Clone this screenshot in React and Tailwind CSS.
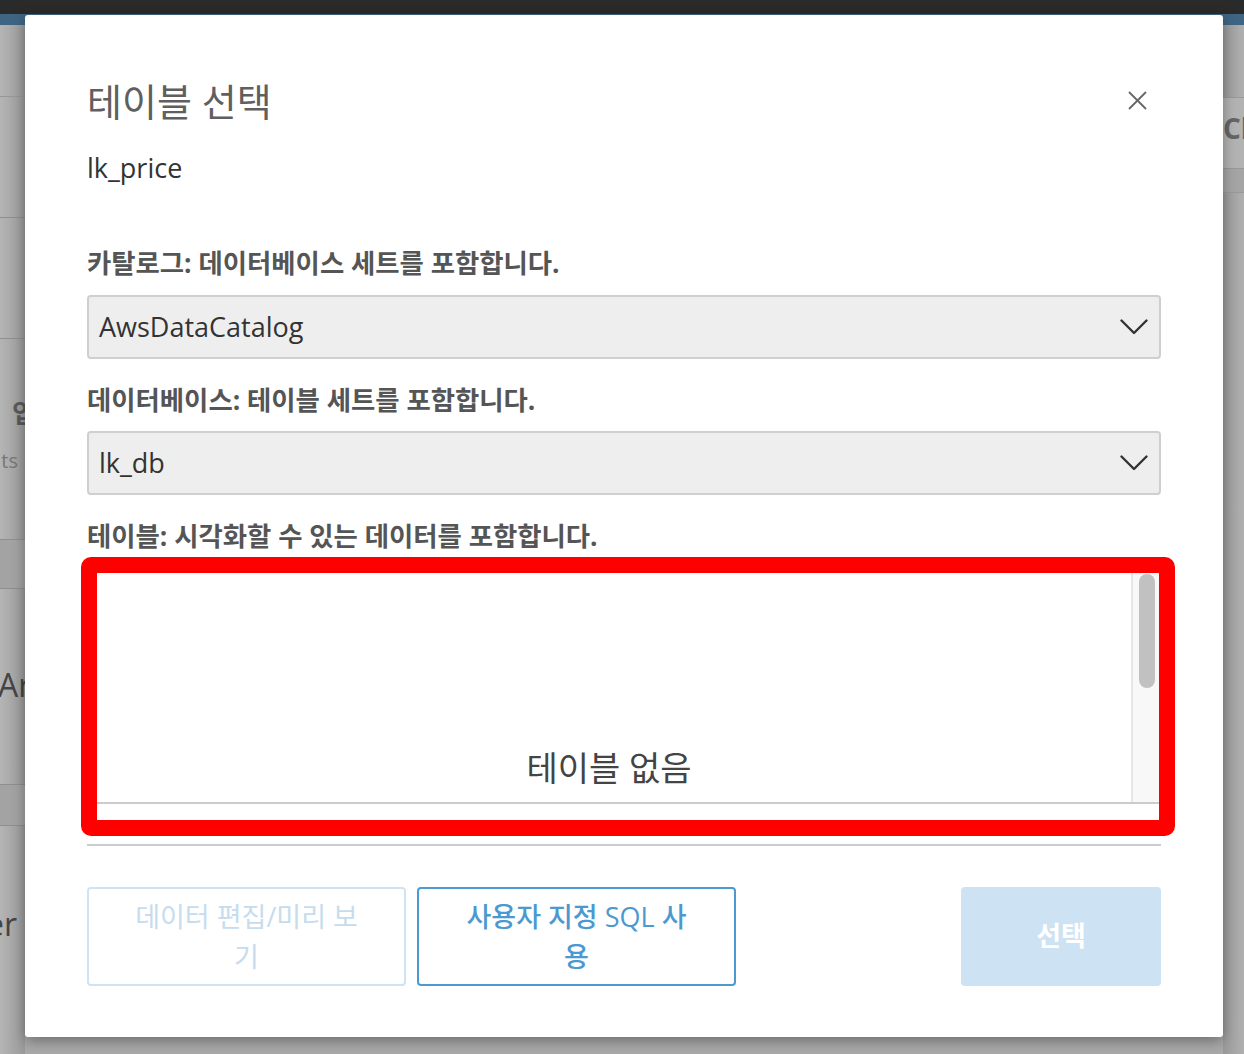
import React from "react";

const FONT = { fontFamily: "'Open Sans','Noto Sans CJK KR',sans-serif" };

function Chevron() {
  return (
    <svg width="28" height="16" viewBox="0 0 28 16" fill="none">
      <path d="M1.5 1.5 L14 14 L26.5 1.5" stroke="#333" strokeWidth="2.4" strokeLinecap="round" strokeLinejoin="round" />
    </svg>
  );
}

function Select({ value }) {
  return (
    <div className="h-[64px] rounded-[4px] border-2 border-[#cfcfcf] bg-[#eeeeee] flex items-center justify-between pl-[10px] pr-[11px]">
      <span className="text-[27px] text-[#333]">{value}</span>
      <Chevron />
    </div>
  );
}

export default function App() {
  return (
    <div className="relative w-[1244px] h-[1054px] overflow-hidden bg-[#a9a9a9]" style={FONT}>
      {/* background page (dimmed) */}
      <div className="h-[14px] bg-[#2a2a2a]" />
      <div className="h-[11px] bg-[#3f6583]" />
      <div className="flex h-[1029px]">
        <div className="w-[25px] flex flex-col bg-gradient-to-r from-[#b5b5b5] to-[#9a9a9a]">
          <div className="h-[72px] border-b border-[#979797]" />
          <div className="h-[121px] border-b border-[#8f8f8f]" />
          <div className="h-[121px] border-b border-[#8f8f8f]" />
          <div className="h-[200px] relative text-[#5a5a5a]">
            <span className="absolute left-[12px] top-[60px] text-[26px] font-bold leading-none" style={{ fontFamily: "'Noto Sans CJK KR',sans-serif" }}>입</span>
            <span className="absolute left-[-4px] top-[112px] text-[20px] text-[#777] leading-none">.ts</span>
          </div>
          <div className="h-[50px] border-y border-[#8f8f8f] bg-[#a3a3a3]" />
          <div className="h-[196px] border-b border-[#8f8f8f] relative">
            <span className="absolute left-[-2px] top-[80px] text-[32px] text-[#444] leading-none">Ar</span>
          </div>
          <div className="h-[41px] border-b border-[#8f8f8f] bg-[#a3a3a3]" />
          <div className="flex-1 relative">
            <span className="absolute left-[-14px] top-[82px] text-[32px] text-[#444] leading-none">er</span>
          </div>
        </div>
        <div className="flex-1" />
        <div className="w-[21px] flex flex-col bg-gradient-to-r from-[#9a9a9a] to-[#b0b0b0]">
          <div className="h-[72px]" />
          <div className="h-[72px] border-y border-[#999] relative bg-[#b3b3b3]">
            <span className="absolute left-[0px] top-[16px] text-[28px] font-bold text-[#666] leading-none">Cl</span>
          </div>
          <div className="h-[24px] border-b border-[#9a9a9a] bg-[#a5a5a5]" />
          <div className="flex-1" />
        </div>
      </div>

      {/* modal */}
      <div className="absolute left-[25px] top-[15px] w-[1198px] h-[1022px] bg-white rounded-[3px] shadow-[0_4px_14px_rgba(0,0,0,0.35)] pt-[66px] px-[62px] flex flex-col">
        <div className="relative h-[40px] flex items-center">
          <span className="text-[38px] text-[#5f5f5f] leading-[40px]">테이블 선택</span>
          <svg className="absolute right-[14px] top-[10px]" width="19" height="19" viewBox="0 0 19 19" fill="none">
            <path d="M1.5 1.5 L17.5 17.5 M17.5 1.5 L1.5 17.5" stroke="#666" strokeWidth="1.8" strokeLinecap="round" />
          </svg>
        </div>
        <div className="mt-[29px] h-[36px] leading-[36px] text-[27px] text-[#333]">lk_price</div>

        <div className="mt-[61px] h-[32px] leading-[32px] text-[26.4px] font-bold text-[#555]">카탈로그: 데이터베이스 세트를 포함합니다.</div>
        <div className="mt-[16px]"><Select value="AwsDataCatalog" /></div>

        <div className="mt-[25px] h-[32px] leading-[32px] text-[26.4px] font-bold text-[#555]">데이터베이스: 테이블 세트를 포함합니다.</div>
        <div className="mt-[15px]"><Select value="lk_db" /></div>

        <div className="mt-[25px] h-[32px] leading-[32px] text-[26.4px] font-bold text-[#555]">테이블: 시각화할 수 있는 데이터를 포함합니다.</div>

        <div className="relative mt-[5px] h-[247px] flex border-b-2 border-[#cccccc]">
          <div className="flex-1 flex items-end justify-center pb-[14px]">
            <span className="text-[34px] leading-[40px] text-[#444]">테이블 없음</span>
          </div>
          <div className="w-[30px] bg-[#f8f8f8] border-l-2 border-[#e6e6e6] pt-[17px] pl-[6px]">
            <div className="w-[16px] h-[114px] rounded-full bg-[#c1c1c1]" />
          </div>
          {/* red highlight overlay */}
          <div className="absolute left-[-6px] top-0 w-[1094px] h-[279px] border-[16px] border-[#ff0000] rounded-[10px] pointer-events-none" />
        </div>

        <div className="mt-[40px] h-[2px] bg-[#cccccc]" />

        <div className="mt-[41px] flex items-stretch h-[99px]">
          <div className="w-[319px] rounded-[4px] border-2 border-[#cfe3f2] flex items-center justify-center text-center text-[27px] leading-[40px] text-[#c6dcee] px-[20px]">
            <span>데이터 편집/미리 보<br />기</span>
          </div>
          <div className="ml-[11px] w-[319px] rounded-[4px] border-2 border-[#4b9ad2] flex items-center justify-center text-center text-[27px] leading-[40px] text-[#4b99d0] font-medium px-[20px]">
            <span>사용자 지정 SQL 사<br />용</span>
          </div>
          <div className="flex-1" />
          <div className="w-[200px] rounded-[4px] bg-[#cde2f2] flex items-center justify-center text-[27px] font-bold text-white">
            선택
          </div>
        </div>
      </div>
    </div>
  );
}
